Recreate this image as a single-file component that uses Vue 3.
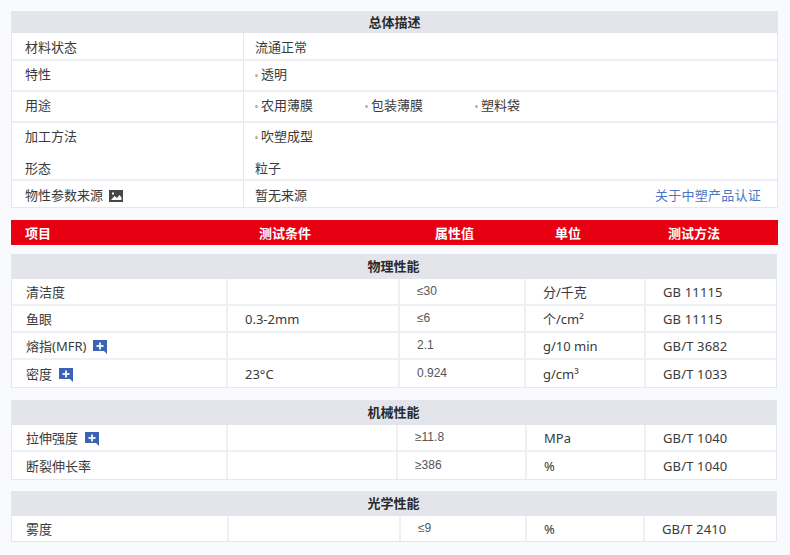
<script setup>
const overview = [
  { key: 'a', label: '材料状态', cls: 'r28', text: '流通正常' },
  { key: 'b', label: '特性', cls: 'r31', items: ['透明'] },
  { key: 'c', label: '用途', cls: 'r31', items: ['农用薄膜', '包装薄膜', '塑料袋'] },
  { key: 'd', label: '加工方法', cls: 'r31 plain', items: ['吹塑成型'] },
  { key: 'e', label: '形态', cls: 'r27b', text: '粒子' },
]
const heads = ['项目', '测试条件', '属性值', '单位', '测试方法']
const sections = [
  {
    title: '物理性能', cols: 'phys',
    rows: [
      ['清洁度', false, '', '≤30', '分/千克', 'GB 11115'],
      ['鱼眼', false, '0.3-2mm', '≤6', '个/cm²', 'GB 11115'],
      ['熔指(MFR)', true, '', '2.1', 'g/10 min', 'GB/T 3682'],
      ['密度', true, '23°C', '0.924', 'g/cm³', 'GB/T 1033'],
    ],
  },
  {
    title: '机械性能', cols: 'mech',
    rows: [
      ['拉伸强度', true, '', '≥11.8', 'MPa', 'GB/T 1040'],
      ['断裂伸长率', false, '', '≥386', '%', 'GB/T 1040'],
    ],
  },
  {
    title: '光学性能', cols: 'opt',
    rows: [['雾度', false, '', '≤9', '%', 'GB/T 2410']],
  },
]
</script>

<template>
  <div class="page">
    <section class="card first">
      <h3 class="title">总体描述</h3>
      <div v-for="r in overview" :key="r.key" class="orow" :class="r.cls">
        <div class="olabel">{{ r.label }}</div>
        <div class="oval">
          <template v-if="r.text">{{ r.text }}</template>
          <span v-for="it in r.items" v-else :key="it" class="item">{{ it }}</span>
        </div>
      </div>
      <div class="orow last">
        <div class="olabel">
          物性参数来源
          <svg class="pic" width="14" height="12" viewBox="0 0 14 12">
            <rect width="14" height="12" fill="#474747" />
            <path d="M2 10 5.500 6 8 8l2.500-3 2 2.500V10z" fill="#fff" />
            <rect x="3" y="2.500" width="2" height="2" fill="#fff" />
          </svg>
        </div>
        <div class="oval split">
          <span>暂无来源</span>
          <a class="link">关于中塑产品认证</a>
        </div>
      </div>
    </section>

    <div class="redbar">
      <span v-for="h in heads" :key="h">{{ h }}</span>
    </div>

    <section v-for="s in sections" :key="s.title" class="card data" :class="s.cols">
      <h3 class="title">{{ s.title }}</h3>
      <div v-for="r in s.rows" :key="r[0]" class="drow">
        <div class="c name">
          {{ r[0] }}
          <svg v-if="r[1]" class="plus" width="14" height="14" viewBox="0 0 14 14">
            <path d="M0 0h14v14l-3-3H0z" fill="#3b63b5" />
            <path d="M6 2.500h2v2.500h2.500v2H8v2.500H6V7H3.500V5H6z" fill="#e8eefa" />
          </svg>
        </div>
        <div class="c cond">{{ r[2] }}</div>
        <div class="c val">{{ r[3] }}</div>
        <div class="c unit">{{ r[4] }}</div>
        <div class="c meth">{{ r[5] }}</div>
      </div>
    </section>
  </div>
</template>

<style scoped>
.page {
  width: 790px;
  height: 555px;
  box-sizing: border-box;
  padding: 11px 12px 0 11px;
  background: #f8fafd;
  overflow: hidden;
  color: #3a3a3a;
  font: 13px/20px "Noto Sans", "Noto Sans CJK SC", sans-serif;
}
.card {
  background: #fff;
  border: 1px solid #e4e7ec;
  border-top: 0;
  box-sizing: border-box;
}
.first {
  width: 767px;
}
.title {
  margin: 0 -1px;
  height: 22px;
  background: #e3e5ea;
  color: #2a2a2a;
  font-size: 13px;
  font-weight: 700;
  line-height: 23px;
  text-align: center;
}
.orow {
  display: grid;
  grid-template-columns: 231px 1fr;
  box-sizing: border-box;
  border-bottom: 2px solid #eceef1;
}
.olabel {
  display: flex;
  align-items: center;
  gap: 6px;
  padding-left: 13px;
}
.oval {
  display: flex;
  align-items: center;
  padding-left: 11px;
  padding-right: 16px;
  border-left: 1px solid #e6e8ec;
}
.r28 { height: 28px; }
.r28 .olabel, .r28 .oval { padding-top: 2px; }
.r31 { height: 31px; }
.r31 .olabel, .r31 .oval { padding-bottom: 3px; }
.plain.r31 .olabel, .plain.r31 .oval { padding-bottom: 5px; }
.r27b { height: 27px; }
.r27b .olabel, .r27b .oval { padding-top: 3px; }
.plain { border-bottom: 0; }
.last { border-bottom: 0; height: 26px; }
.last .olabel, .last .oval { padding-top: 1px; }
.item {
  position: relative;
  width: 110px;
  box-sizing: border-box;
  padding-left: 6px;
}
.item::before {
  content: "";
  position: absolute;
  left: 0;
  top: 10px;
  width: 3px;
  height: 3px;
  border-radius: 50%;
  background: #bfae9c;
}
.split {
  justify-content: space-between;
}
.link {
  color: #4a76c4;
  letter-spacing: 0.25px;
}
.pic {
  flex: none;
  margin-top: 2px;
}
.redbar {
  display: grid;
  grid-template-columns: 221px 172px 120px 110px 1fr;
  margin-top: 12px;
  width: 767px;
  height: 25px;
  padding-left: 14px;
  box-sizing: border-box;
  background: #e60012;
  color: #fff;
  font-weight: 700;
  line-height: 26px;
}
.redbar span {
  white-space: nowrap;
}
.redbar span:nth-child(2) { padding-left: 13px; }
.redbar span:nth-child(3) { padding-left: 17px; }
.redbar span:nth-child(4) { padding-left: 17px; }
.redbar span:nth-child(5) { padding-left: 20px; }
.data {
  width: 766px;
  margin-top: 12px;
}
.redbar + .data {
  margin-top: 9px;
}
.data.opt {
  margin-top: 11px;
}
.data .title {
  height: 25px;
  margin-right: 0;
  margin-left: -1px;
  line-height: 24px;
}
.drow {
  display: grid;
  height: 27px;
  box-sizing: border-box;
  border-bottom: 2px solid #eef0f3;
}
.drow:last-child {
  border-bottom: 0;
}
.phys .drow { grid-template-columns: 214px 172px 126px 120px 1fr; }
.mech .drow { grid-template-columns: 214px 170px 129px 119px 1fr; }
.opt .drow { grid-template-columns: 215px 172px 126px 118px 1fr; height: 25px; }
.c {
  display: flex;
  align-items: center;
  gap: 7px;
  padding-left: 17px;
  border-left: 2px solid #eef0f3;
  white-space: nowrap;
}
.name {
  padding-left: 14px;
  border-left: 0;
}
.plus {
  flex: none;
  margin-top: 3px;
}
.val {
  padding-bottom: 2px;
  font: 12px/20px "Liberation Sans", sans-serif;
  color: #555;
}
.unit, .meth {
  padding-left: 17px;
}
.meth {
  letter-spacing: 0.15px;
}
</style>
